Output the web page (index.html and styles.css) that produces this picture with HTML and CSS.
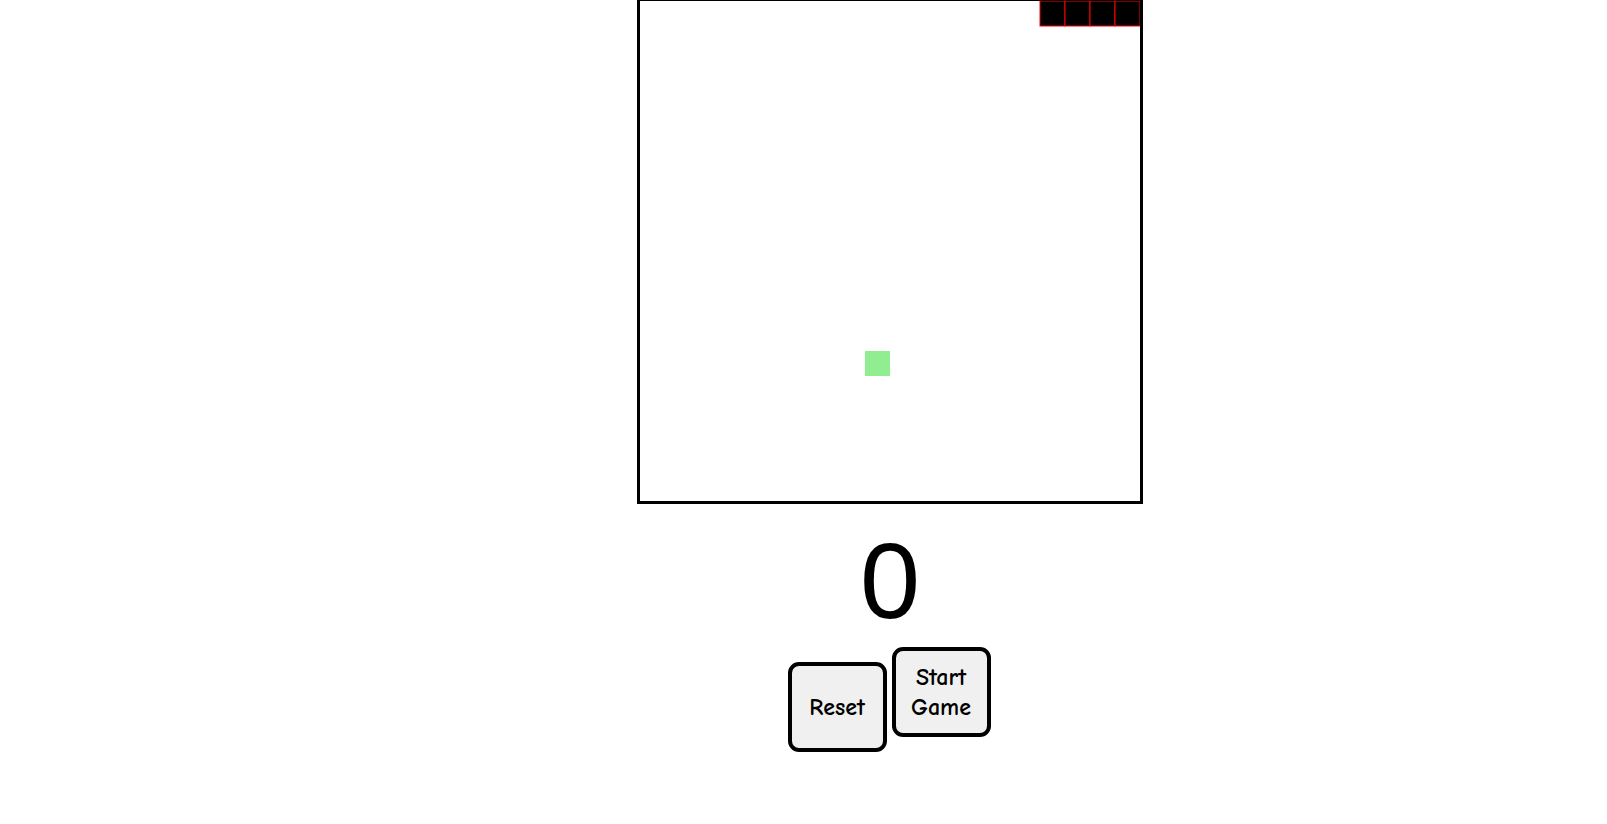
FILE: index.html
```html
<!DOCTYPE html>
<html lang="en">
<head>
    <meta charset="UTF-8">
    <meta name="viewport" content="width=device-width, initial-scale=1.0">
    <title>Snake</title>
    <link rel="stylesheet" href="styles.css">
</head>
<body>
    <div class="juego">
        <canvas id="tablero" class="tablero" width="500" height="500"></canvas>
        <div class="puntaje" id="puntaje">0</div>
        <div class="botones">
            <button class="boton boton-reset" id="reset">Reset</button>
            <button class="boton" id="start">Start Game</button>
        </div>
    </div>
    <script>
const canvas = document.getElementById("tablero");
const ctx = canvas.getContext("2d");
const unit = 25;

let snake = [
  { x: 475, y: 0 },
  { x: 450, y: 0 },
  { x: 425, y: 0 },
  { x: 400, y: 0 }
];
let food = { x: 225, y: 350 };

// dibujar comida
ctx.fillStyle = "lightgreen";
ctx.fillRect(food.x, food.y, unit, unit);

// dibujar serpiente
for (let i = snake.length - 1; i >= 0; i--) {
  ctx.fillStyle = "black";
  ctx.strokeStyle = "red";
  ctx.fillRect(snake[i].x, snake[i].y, unit, unit);
  ctx.strokeRect(snake[i].x, snake[i].y, unit, unit);
}
    </script>
</body>
</html>
```

FILE: styles.css
```css
body {
    margin: 0;
    background-color: #fff;
}

.juego {
    width: 506px;
    margin-left: 637px;
    display: flex;
    flex-direction: column;
    align-items: center;
}

.tablero {
    display: block;
    margin-top: -2px;
    border: 3px solid black;
}

.puntaje {
    margin-top: 15px;
    font-family: "Liberation Sans", Arial, sans-serif;
    font-size: 108px;
    line-height: 124px;
    color: black;
}

.botones {
    display: flex;
    align-items: flex-start;
    gap: 5px;
    margin-top: 4px;
    margin-left: -2px;
}

.boton {
    width: 99px;
    height: 90px;
    padding: 0 10px;
    border: 4px solid black;
    border-radius: 11px;
    background-color: #f0f0f0;
    font-family: "Comic Sans MS", "Comic Neue", cursive;
    font-size: 24px;
    font-weight: 600;
    line-height: 30px;
    color: black;
    cursor: pointer;
}

.boton-reset {
    margin-top: 15px;
}
```
